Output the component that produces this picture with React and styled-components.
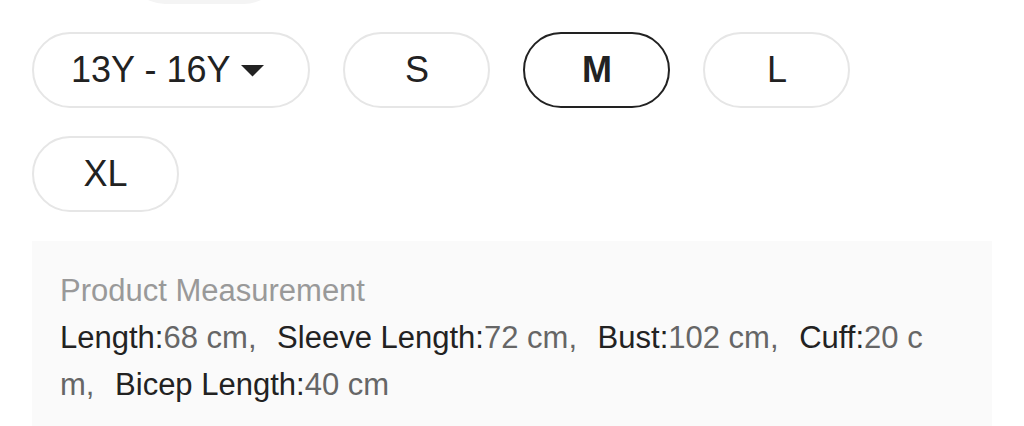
import React from "react";
import styled, { createGlobalStyle } from "styled-components";

const Global = createGlobalStyle`
  html, body { margin: 0; padding: 0; background: #fff; }
  body { font-family: "Liberation Sans", Arial, Helvetica, sans-serif; color: #222; }
`;

const Page = styled.div`
  padding: 0 32px;
  overflow: hidden;
  height: 426px;
  box-sizing: border-box;
`;

const TopRow = styled.div`
  display: flex;
  margin-top: -72px;
  padding-left: 95px;
`;

const GreyChip = styled.div`
  width: 155px;
  height: 76px;
  border-radius: 38px;
  background: #f4f4f4;
`;

const Options = styled.div`
  display: flex;
  flex-wrap: wrap;
  column-gap: 33px;
  row-gap: 28px;
  margin-top: 28px;
`;

const Pill = styled.button`
  box-sizing: border-box;
  height: 76px;
  min-width: 147px;
  padding: ${(p) => (p.$wide ? "0 44px 0 37px" : "0 24px")};
  border-radius: 38px;
  border: 2px solid ${(p) => (p.$active ? "#222" : "#e6e6e6")};
  background: #fff;
  color: #222;
  font-family: "Liberation Sans", Arial, Helvetica, sans-serif;
  font-size: 36px;
  font-weight: ${(p) => (p.$active ? 700 : 400)};
  display: inline-flex;
  align-items: center;
  justify-content: center;
  gap: 11px;
  cursor: pointer;
`;

const Caret = styled.svg`
  width: 23px;
  height: 12px;
  margin-top: 2px;
  display: block;
`;

const Panel = styled.div`
  margin-top: 29px;
  background: #fafafa;
  padding: 26px 40px 24px 28px;
  font-size: 31px;
  line-height: 47px;
`;

const Title = styled.div`
  color: #999;
`;

const Specs = styled.div`
  word-break: break-all;
`;

const Item = styled.span`
  margin-right: 12px;
`;

const Label = styled.span`
  color: #222;
`;

const Value = styled.span`
  color: #666;
`;

const sizes = [
  { label: "S" },
  { label: "M", active: true },
  { label: "L" },
  { label: "XL" },
];

const specs = [
  ["Length", "68 cm"],
  ["Sleeve Length", "72 cm"],
  ["Bust", "102 cm"],
  ["Cuff", "20 cm"],
  ["Bicep Length", "40 cm"],
];

export default function App() {
  return (
    <>
      <Global />
      <Page>
        <TopRow>
          <GreyChip />
        </TopRow>
        <Options>
          <Pill $wide>
            13Y - 16Y
            <Caret viewBox="0 0 23 12">
              <path d="M0 0 H23 L11.5 11.5 Z" fill="#222" />
            </Caret>
          </Pill>
          {sizes.map((s) => (
            <Pill key={s.label} $active={s.active}>
              {s.label}
            </Pill>
          ))}
        </Options>
        <Panel>
          <Title>Product Measurement</Title>
          <Specs>
            {specs.map(([k, v], i) => (
              <Item key={k}>
                <Label>{k}:</Label>
                <Value>
                  {v}
                  {i < specs.length - 1 ? ", " : ""}
                </Value>
              </Item>
            ))}
          </Specs>
        </Panel>
      </Page>
    </>
  );
}
